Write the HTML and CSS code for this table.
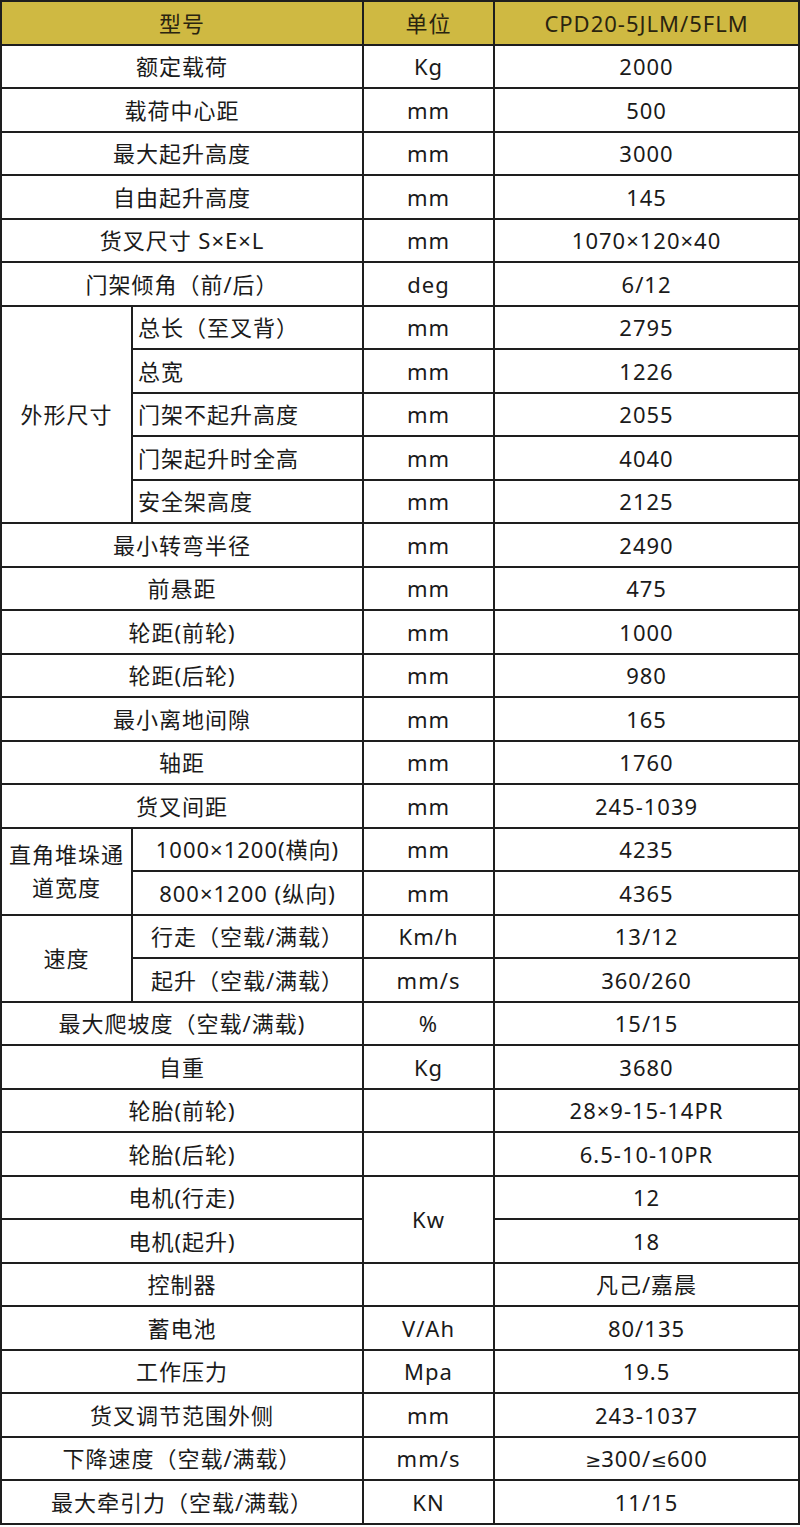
FILE: index.html
```html
<!DOCTYPE html>
<html lang="zh">
<head>
<meta charset="utf-8">
<link rel="stylesheet" href="styles.css">
</head>
<body>
<table class="spec">
<colgroup>
<col class="c1a"><col class="c1b"><col class="c2"><col class="c3">
</colgroup>
<thead>
<tr class="head"><th colspan="2">型号</th><th>单位</th><th>CPD20-5JLM/5FLM</th></tr>
</thead>
<tbody>
<tr><td colspan="2">额定载荷</td><td>Kg</td><td>2000</td></tr>
<tr><td colspan="2">载荷中心距</td><td>mm</td><td>500</td></tr>
<tr><td colspan="2">最大起升高度</td><td>mm</td><td>3000</td></tr>
<tr><td colspan="2">自由起升高度</td><td>mm</td><td>145</td></tr>
<tr><td colspan="2">货叉尺寸 S×E×L</td><td>mm</td><td>1070×120×40</td></tr>
<tr><td colspan="2">门架倾角（前/后）</td><td>deg</td><td>6/12</td></tr>
<tr><td rowspan="5">外形尺寸</td><td class="left">总长（至叉背）</td><td>mm</td><td>2795</td></tr>
<tr><td class="left">总宽</td><td>mm</td><td>1226</td></tr>
<tr><td class="left">门架不起升高度</td><td>mm</td><td>2055</td></tr>
<tr><td class="left">门架起升时全高</td><td>mm</td><td>4040</td></tr>
<tr><td class="left">安全架高度</td><td>mm</td><td>2125</td></tr>
<tr><td colspan="2">最小转弯半径</td><td>mm</td><td>2490</td></tr>
<tr><td colspan="2">前悬距</td><td>mm</td><td>475</td></tr>
<tr><td colspan="2">轮距(前轮)</td><td>mm</td><td>1000</td></tr>
<tr><td colspan="2">轮距(后轮)</td><td>mm</td><td>980</td></tr>
<tr><td colspan="2">最小离地间隙</td><td>mm</td><td>165</td></tr>
<tr><td colspan="2">轴距</td><td>mm</td><td>1760</td></tr>
<tr><td colspan="2">货叉间距</td><td>mm</td><td>245-1039</td></tr>
<tr><td rowspan="2" class="wrap">直角堆垛通道宽度</td><td>1000×1200(横向)</td><td>mm</td><td>4235</td></tr>
<tr><td>800×1200 (纵向)</td><td>mm</td><td>4365</td></tr>
<tr><td rowspan="2">速度</td><td>行走（空载/满载）</td><td>Km/h</td><td>13/12</td></tr>
<tr><td>起升（空载/满载）</td><td>mm/s</td><td>360/260</td></tr>
<tr><td colspan="2">最大爬坡度（空载/满载)</td><td>%</td><td>15/15</td></tr>
<tr><td colspan="2">自重</td><td>Kg</td><td>3680</td></tr>
<tr><td colspan="2">轮胎(前轮)</td><td></td><td>28×9-15-14PR</td></tr>
<tr><td colspan="2">轮胎(后轮)</td><td></td><td>6.5-10-10PR</td></tr>
<tr><td colspan="2">电机(行走)</td><td rowspan="2">Kw</td><td>12</td></tr>
<tr><td colspan="2">电机(起升)</td><td>18</td></tr>
<tr><td colspan="2">控制器</td><td></td><td>凡己/嘉晨</td></tr>
<tr><td colspan="2">蓄电池</td><td>V/Ah</td><td>80/135</td></tr>
<tr><td colspan="2">工作压力</td><td>Mpa</td><td>19.5</td></tr>
<tr><td colspan="2">货叉调节范围外侧</td><td>mm</td><td>243-1037</td></tr>
<tr><td colspan="2">下降速度（空载/满载）</td><td>mm/s</td><td><span class="math">≥</span>300/<span class="math">≤</span>600</td></tr>
<tr><td colspan="2">最大牵引力（空载/满载）</td><td>KN</td><td>11/15</td></tr>
</tbody>
</table>
</body>
</html>
```
FILE: styles.css
```css
html, body {
  margin: 0;
  padding: 0;
  background: #ffffff;
}
.spec {
  border-collapse: collapse;
  table-layout: fixed;
  width: 798px;
  font-family: "Noto Sans", "Noto Sans CJK SC", sans-serif;
  font-size: 22px;
  letter-spacing: 1px;
  color: #1a1a1a;
}
.c1a { width: 131px; }
.c1b { width: 231px; }
.c2 { width: 131px; }
.c3 { width: 305px; }
.spec th, .spec td {
  border: 2px solid #1e1e1e;
  height: 41.5px;
  padding: 0 4px;
  text-align: center;
  vertical-align: middle;
  font-weight: 400;
  white-space: nowrap;
  line-height: 1.2;
}
.head th {
  background: #cfb942;
  color: #2a2410;
}
.spec td.left {
  text-align: left;
  padding-left: 5px;
}
.spec td.wrap {
  white-space: normal;
  padding: 0 4px;
  line-height: 1.5;
}
.math {
  font-family: "DejaVu Sans", sans-serif;
  font-size: 19px;
  letter-spacing: 0;
}
```
